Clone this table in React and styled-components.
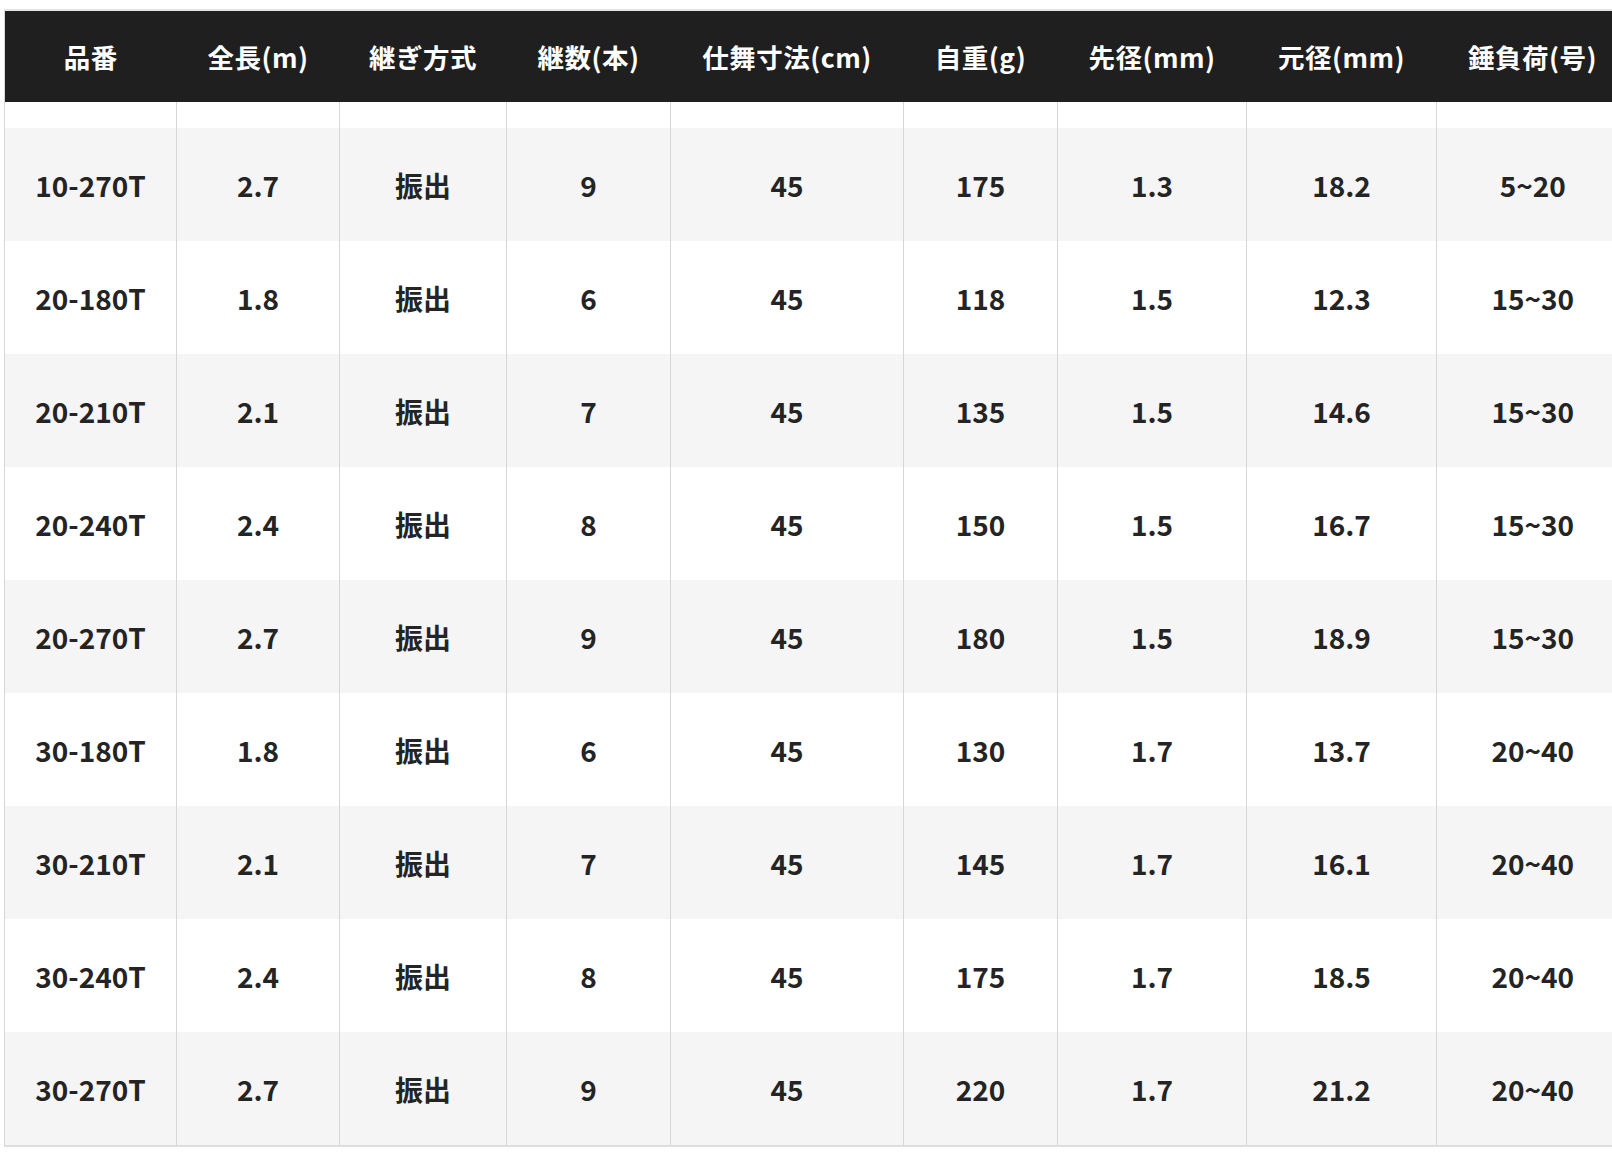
import { createGlobalStyle, styled } from 'styled-components';

const GlobalStyle = createGlobalStyle`
  html, body {
    margin: 0;
    padding: 0;
    background: #fff;
    overflow: hidden;
  }
  body {
    font-family: "Noto Sans CJK JP", "Noto Sans", sans-serif;
  }
`;

const columns = [
  { label: '品番', width: 172 },
  { label: '全長(m)', width: 163 },
  { label: '継ぎ方式', width: 167 },
  { label: '継数(本)', width: 164 },
  { label: '仕舞寸法(cm)', width: 233 },
  { label: '自重(g)', width: 154 },
  { label: '先径(mm)', width: 189 },
  { label: '元径(mm)', width: 190 },
  { label: '錘負荷(号)', width: 192 },
];

const rows = [
  ['10-270T', '2.7', '振出', '9', '45', '175', '1.3', '18.2', '5~20'],
  ['20-180T', '1.8', '振出', '6', '45', '118', '1.5', '12.3', '15~30'],
  ['20-210T', '2.1', '振出', '7', '45', '135', '1.5', '14.6', '15~30'],
  ['20-240T', '2.4', '振出', '8', '45', '150', '1.5', '16.7', '15~30'],
  ['20-270T', '2.7', '振出', '9', '45', '180', '1.5', '18.9', '15~30'],
  ['30-180T', '1.8', '振出', '6', '45', '130', '1.7', '13.7', '20~40'],
  ['30-210T', '2.1', '振出', '7', '45', '145', '1.7', '16.1', '20~40'],
  ['30-240T', '2.4', '振出', '8', '45', '175', '1.7', '18.5', '20~40'],
  ['30-270T', '2.7', '振出', '9', '45', '220', '1.7', '21.2', '20~40'],
];

const Wrap = styled.div`
  padding: 9px 0 0 4px;
`;

const SpecTable = styled.table`
  border-collapse: collapse;
  table-layout: fixed;
  width: 1624px;
  border-top: 2px solid #e4e4e4;
  border-left: 1px solid #d6d6d6;
  border-bottom: 2px solid #dedede;
`;

const HeadCell = styled.th`
  height: 91px;
  padding: 0;
  background: #1f1f1f;
  color: #fff;
  font-size: 26.5px;
  font-weight: 700;
  text-align: center;
  vertical-align: middle;
  letter-spacing: 0.5px;
`;

const Row = styled.tr`
  background: ${(props) => (props.$striped ? '#f5f5f5' : '#fff')};
`;

const Cell = styled.td`
  height: ${(props) => props.$h}px;
  padding: 0;
  border-left: 1px solid #d6d6d6;
  color: #242424;
  font-size: 28px;
  font-weight: 700;
  text-align: center;
  vertical-align: middle;

  &:first-child {
    border-left: none;
  }
`;

const App = () => {
  return (
    <>
      <GlobalStyle />
      <Wrap>
        <SpecTable>
          <colgroup>
            {columns.map((c) => (
              <col key={c.label} style={{ width: c.width }} />
            ))}
          </colgroup>
          <thead>
            <tr>
              {columns.map((c) => (
                <HeadCell key={c.label}>{c.label}</HeadCell>
              ))}
            </tr>
          </thead>
          <tbody>
            {/* 헤더 아래 빈 간격 */}
            <Row>
              {columns.map((c) => (
                <Cell key={c.label} $h={26} />
              ))}
            </Row>
            {rows.map((r, i) => (
              <Row key={r[0]} $striped={i % 2 === 0}>
                {r.map((v, j) => (
                  <Cell key={j} $h={113}>
                    {v}
                  </Cell>
                ))}
              </Row>
            ))}
          </tbody>
        </SpecTable>
      </Wrap>
    </>
  );
};

export default App;
